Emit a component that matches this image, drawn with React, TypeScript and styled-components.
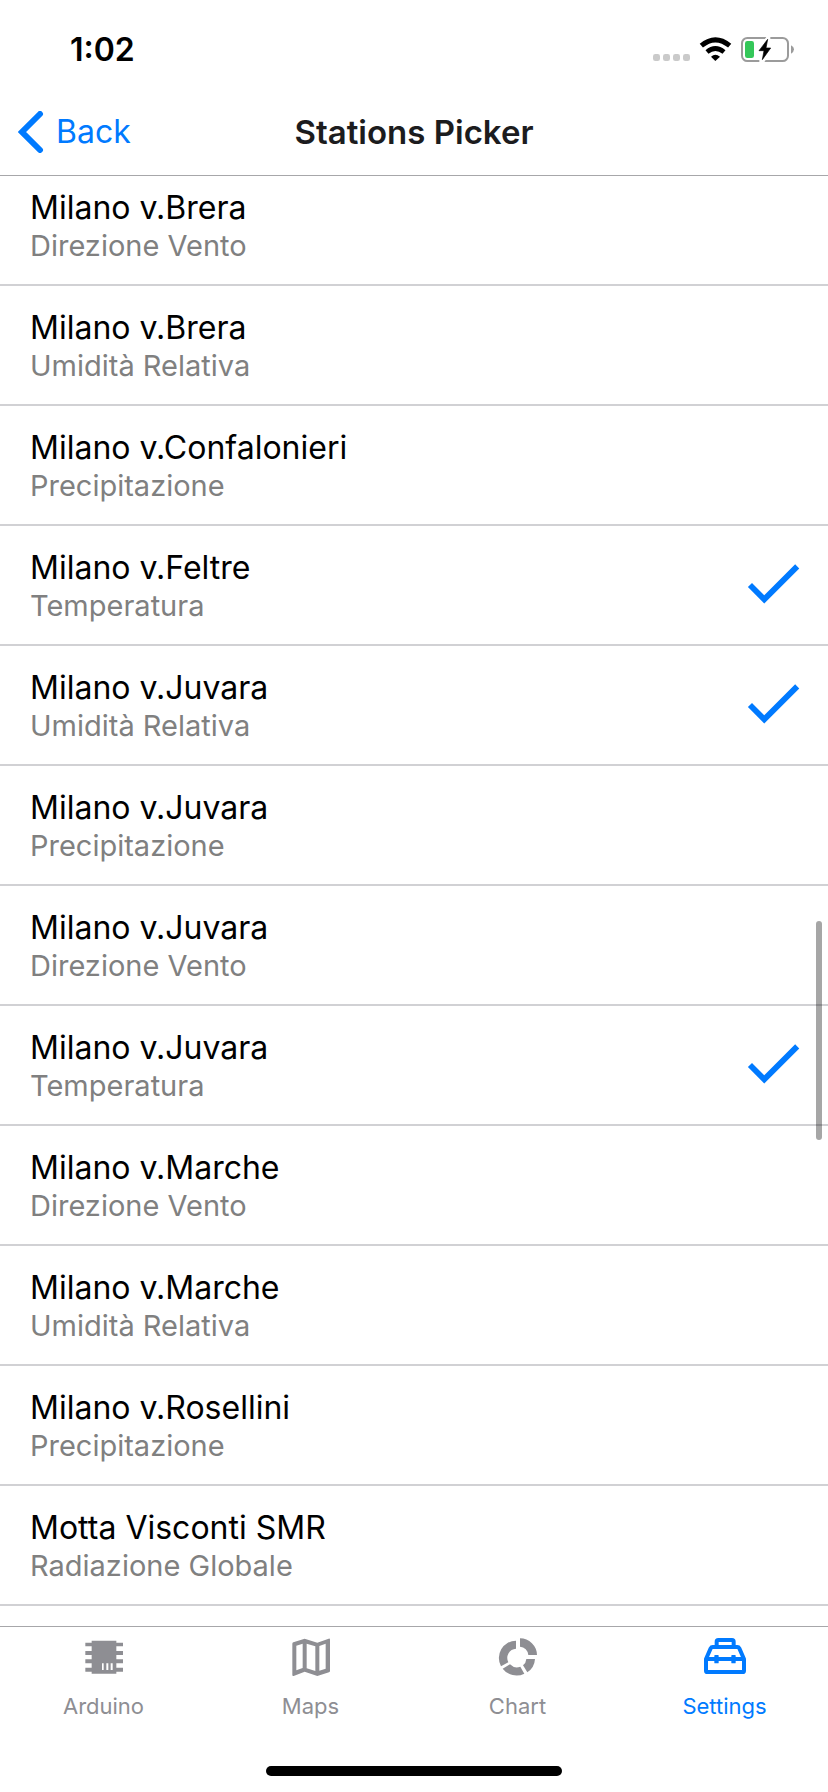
import React, { useState } from "react";
import styled, { createGlobalStyle } from "styled-components";

const BLUE = "#007aff";
const GRAY = "#8e8e93";

const GlobalStyle = createGlobalStyle`
  *, *::before, *::after { box-sizing: border-box; }
  body {
    margin: 0;
    background: #fff;
    font-family: Inter, "Liberation Sans", sans-serif;
  }
`;

const Screen = styled.div`
  display: flex;
  flex-direction: column;
  height: 100vh;
  background: #fff;
`;

const StatusBar = styled.div`
  flex: none;
  display: flex;
  justify-content: space-between;
  height: 88px;
  padding: 30px 33px 0 70px;
`;

const Clock = styled.time`
  font-size: 32px;
  line-height: 40px;
  font-weight: 600;
  color: #000;
`;

const StatusIcons = styled.svg`
  width: 144px;
  height: 28px;
  margin-top: 6px;
`;

const NavBar = styled.header`
  flex: none;
  display: grid;
  grid-template-columns: 1fr auto 1fr;
  align-items: center;
  height: 88px;
  padding: 0 18px;
  border-bottom: 1px solid #a7a7aa;
`;

const BackButton = styled.button`
  justify-self: start;
  display: flex;
  align-items: center;
  gap: 12px;
  padding: 0;
  border: 0;
  background: none;
  color: ${BLUE};
  font: inherit;
  font-size: 32px;
  line-height: 40px;
  cursor: pointer;
`;

const Chevron = styled.svg`
  width: 26px;
  height: 42px;
`;

const Title = styled.h1`
  margin: 0;
  font-size: 33px;
  line-height: 40px;
  font-weight: 600;
  color: #1c1c1e;
`;

const ListArea = styled.main`
  position: relative;
  flex: 1;
  min-height: 0;
  overflow: hidden;
`;

const List = styled.ul`
  list-style: none;
  margin: -10px 0 0;
  padding: 0;
`;

const Row = styled.label`
  display: flex;
  align-items: center;
  justify-content: space-between;
  padding: 22px 20px 20px 30px;
  border-bottom: 2px solid #d1d1d4;
  cursor: pointer;
`;

const RowText = styled.span`
  display: flex;
  flex-direction: column;
`;

const Name = styled.span`
  font-size: 32px;
  line-height: 40px;
  color: #000;
`;

const Sensor = styled.span`
  font-size: 29px;
  line-height: 36px;
  color: #808080;
`;

const Toggle = styled.input`
  appearance: none;
  position: absolute;
  width: 1px;
  height: 1px;
  margin: 0;
`;

const CheckMark = styled.svg`
  width: 70px;
  height: 70px;
  margin-bottom: 6px;
  fill: ${BLUE};
`;

const ScrollThumb = styled.div`
  position: absolute;
  top: 745px;
  right: 6px;
  width: 6px;
  height: 219px;
  border-radius: 3px;
  background: rgba(0, 0, 0, 0.35);
`;

const Footer = styled.footer`
  flex: none;
  display: flex;
  flex-direction: column;
  align-items: center;
  justify-content: space-between;
  height: 166px;
  padding-bottom: 16px;
  border-top: 1px solid #a7a7aa;
`;

const Tabs = styled.nav`
  display: grid;
  grid-template-columns: repeat(4, 1fr);
  width: 100%;
`;

const Tab = styled.a<{ $active?: boolean }>`
  display: flex;
  flex-direction: column;
  align-items: center;
  gap: 12px;
  padding-top: 8px;
  color: ${(p) => (p.$active ? BLUE : GRAY)};
  font-size: 22px;
  line-height: 28px;
  text-decoration: none;
`;

const TabIcon = styled.svg`
  width: 45px;
  height: 45px;
  fill: currentColor;
`;

const HomeIndicator = styled.div`
  width: 296px;
  height: 10px;
  border-radius: 5px;
  background: #000;
`;

const stations = [
  { name: "Milano v.Brera", sensor: "Direzione Vento" },
  { name: "Milano v.Brera", sensor: "Umidità Relativa" },
  { name: "Milano v.Confalonieri", sensor: "Precipitazione" },
  { name: "Milano v.Feltre", sensor: "Temperatura", picked: true },
  { name: "Milano v.Juvara", sensor: "Umidità Relativa", picked: true },
  { name: "Milano v.Juvara", sensor: "Precipitazione" },
  { name: "Milano v.Juvara", sensor: "Direzione Vento" },
  { name: "Milano v.Juvara", sensor: "Temperatura", picked: true },
  { name: "Milano v.Marche", sensor: "Direzione Vento" },
  { name: "Milano v.Marche", sensor: "Umidità Relativa" },
  { name: "Milano v.Rosellini", sensor: "Precipitazione" },
  { name: "Motta Visconti SMR", sensor: "Radiazione Globale" },
];

function StationRow({ name, sensor, picked }: { name: string; sensor: string; picked?: boolean }) {
  const [checked, setChecked] = useState(!!picked);
  return (
    <li>
      <Row>
        <RowText>
          <Name>{name}</Name>
          <Sensor>{sensor}</Sensor>
        </RowText>
        <Toggle type="checkbox" checked={checked} onChange={(e) => setChecked(e.target.checked)} />
        {checked && (
          <CheckMark viewBox="0 0 24 24" aria-hidden="true">
            <path d="M9 16.2 4.8 12l-1.4 1.4L9 19 21 7l-1.4-1.4z" />
          </CheckMark>
        )}
      </Row>
    </li>
  );
}

const ArduinoIcon = () => (
  <TabIcon viewBox="0 0 135 135" aria-hidden="true">
    <path
      fillRule="evenodd"
      d="M32 17H106V23H126V34H106V48H126V60H106V73H126V85H106V98H126V110H106V116H32V110H13V98H32V85H13V73H32V60H13V48H32V34H13V23H32ZM63 85V105H68V85ZM76 85V105H82V85ZM89 85V105H95V85Z"
    />
  </TabIcon>
);

const MapIcon = () => (
  <TabIcon viewBox="0 0 135 135" aria-hidden="true">
    <path
      fillRule="evenodd"
      d="M16 22 50 11 88 23 122 11Q126 10 126 14V108Q126 111 123 112L88 123 50 110 17 123Q13 124 13 120V26Q13 23 16 22ZM25 32V106L44 99V26ZM56 26V100L82 108V34ZM94 33V107L113 101V26Z"
    />
  </TabIcon>
);

const ChartIcon = () => (
  <TabIcon viewBox="0 0 135 135" aria-hidden="true">
    <path d="M75 10A51 51 0 0 1 126 60H100A27 27 0 0 0 75 35Z" />
    <path d="M63 17V41A28 28 0 0 0 40 82L18 94A52 52 0 0 1 63 17Z" />
    <path d="M23 101 45 88A29 29 0 0 0 76 95L88 116A52 52 0 0 1 23 101Z" />
    <path d="M120 72A52 52 0 0 1 97 112L84 91A27 27 0 0 0 94 72Z" />
  </TabIcon>
);

const SettingsIcon = () => (
  <TabIcon viewBox="0 0 135 135" aria-hidden="true">
    <path
      fill="none"
      stroke="currentColor"
      strokeWidth="12"
      strokeLinejoin="round"
      d="M12 72 26 40Q28 36 32 36H106Q110 36 112 40L126 72V107Q126 111 122 111H16Q12 111 12 107ZM44 36V20Q44 15 49 15H90Q95 15 95 20V36M12 72H126"
    />
    <rect x="37" y="60" width="13" height="25" rx="2" />
    <rect x="88" y="60" width="13" height="25" rx="2" />
  </TabIcon>
);

const tabs = [
  { label: "Arduino", Icon: ArduinoIcon },
  { label: "Maps", Icon: MapIcon },
  { label: "Chart", Icon: ChartIcon },
  { label: "Settings", Icon: SettingsIcon, active: true },
];

export default function App() {
  return (
    <Screen>
      <GlobalStyle />
      <StatusBar>
        <Clock>1:02</Clock>
        <StatusIcons viewBox="63 48 432 84" aria-hidden="true">
          {[69, 99, 129, 159].map((x) => (
            <rect key={x} x={x} y="102" width="21" height="21" rx="7" fill="#cacaca" />
          ))}
          <g fill="none" stroke="#000">
            <path strokeWidth="15" d="M214 77Q256 42 299 77" />
            <path strokeWidth="14" d="M231 96Q256 75 282 96" />
          </g>
          <path d="M243 110Q256 98 270 110L256 123Z" />
          <rect x="336" y="54" width="138" height="69" rx="16" fill="none" stroke="#9b9b9b" strokeWidth="6" />
          <path d="M483 76Q492 80 492 88T483 101Z" fill="#9b9b9b" />
          <rect x="345" y="63" width="27" height="51" rx="7" fill="#34c759" />
          <path d="M411 48H421V78H432L401 130H388V98H376Z" fill="#fff" />
          <path d="M413 58 387 92H402L397 119 422 84H408Z" stroke="#000" strokeWidth="2" />
        </StatusIcons>
      </StatusBar>
      <NavBar>
        <BackButton type="button">
          <Chevron viewBox="0 0 26 42" aria-hidden="true">
            <path d="M22 3 4 21 22 39" fill="none" stroke={BLUE} strokeWidth="6" strokeLinecap="round" />
          </Chevron>
          Back
        </BackButton>
        <Title>Stations Picker</Title>
      </NavBar>
      <ListArea>
        <List>
          {stations.map((s, i) => (
            <StationRow key={i} {...s} />
          ))}
        </List>
        <ScrollThumb />
      </ListArea>
      <Footer>
        <Tabs>
          {tabs.map(({ label, Icon, active }) => (
            <Tab key={label} href={`#${label.toLowerCase()}`} $active={active}>
              <Icon />
              {label}
            </Tab>
          ))}
        </Tabs>
        <HomeIndicator />
      </Footer>
    </Screen>
  );
}
